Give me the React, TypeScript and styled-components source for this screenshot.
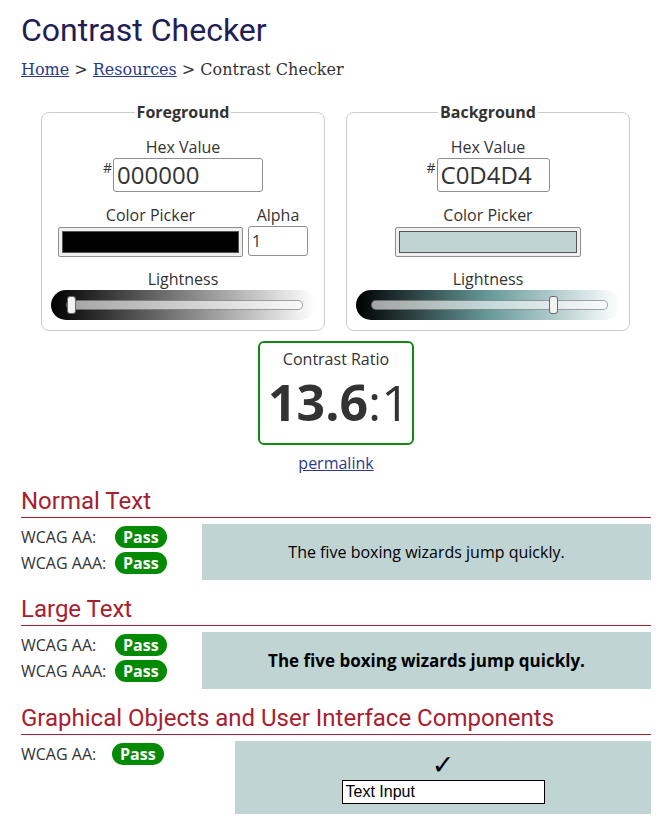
import React from "react";
import styled, { createGlobalStyle } from "styled-components";

const GlobalStyle = createGlobalStyle`
  body {
    margin: 0;
    background: #fff;
    font-family: "Open Sans", "DejaVu Sans", sans-serif;
    color: #333;
  }
`;

const Page = styled.main`
  width: 630px;
  padding: 11px 0 20px 21px;
`;

const Title = styled.h1`
  margin: 0;
  font-family: Roboto, "Liberation Sans", sans-serif;
  font-weight: 400;
  font-size: 32px;
  line-height: 38px;
  color: #1e2056;
`;

const Crumbs = styled.nav`
  margin-top: 10px;
  font-family: "DejaVu Serif", "Liberation Serif", serif;
  font-size: 16px;
  line-height: 22px;
  color: #333;
`;

const Link = styled.a`
  color: #2b3a8c;
  text-decoration: underline;
`;

const Panels = styled.div`
  display: grid;
  grid-template-columns: 284px 284px;
  column-gap: 21px;
  margin-top: 20px;
  padding-left: 20px;
`;

const Panel = styled.fieldset`
  margin: 0;
  padding: 14px 8px 10px;
  border: 1px solid #ccc;
  border-radius: 8px;
  min-width: 0;
  display: flex;
  flex-direction: column;
  align-items: center;
`;

const Legend = styled.legend`
  margin: 0 auto;
  padding: 0 2px;
  font-weight: 700;
  font-size: 16px;
  line-height: 22px;
  color: #333;
`;

const Label = styled.div<{ $gap?: number }>`
  margin-top: ${(p) => p.$gap ?? 0}px;
  font-size: 16px;
  line-height: 20px;
  color: #333;
  text-align: center;
`;

const HexRow = styled.div`
  display: flex;
  align-items: flex-start;
  margin-top: 1px;
`;

const Hash = styled.span`
  font-size: 14px;
  line-height: 14px;
  margin-top: 3px;
  padding-right: 1px;
`;

const TextBox = styled.div<{ $w: number; $h: number; $size: number; $mt?: number }>`
  box-sizing: border-box;
  width: ${(p) => p.$w}px;
  height: ${(p) => p.$h}px;
  margin-top: ${(p) => p.$mt ?? 0}px;
  border: 1px solid #8f8f8f;
  border-radius: 3px;
  padding: 0 3px;
  font-size: ${(p) => p.$size}px;
  line-height: ${(p) => p.$h - 2}px;
  color: #333;
  background: #fff;
`;

const PickerRow = styled.div`
  display: flex;
  gap: 5px;
  align-items: flex-start;
`;

const PickerCol = styled.div`
  display: flex;
  flex-direction: column;
  align-items: center;
`;

const Swatch = styled.div<{ $w: number }>`
  box-sizing: border-box;
  width: ${(p) => p.$w}px;
  height: 30px;
  margin-top: 2px;
  padding: 3px 3px;
  border: 1px solid #8f8f8f;
  border-radius: 2px;
  background: #efefef;
`;

const SwatchFill = styled.div<{ $c: string }>`
  box-sizing: border-box;
  height: 100%;
  border: 1px solid #555;
  background: ${(p) => p.$c};
`;

const SliderWell = styled.div<{ $g: string }>`
  box-sizing: border-box;
  width: 264px;
  height: 30px;
  margin-top: 1px;
  border-radius: 15px;
  padding: 0 12px 0 15px;
  display: flex;
  align-items: center;
  background: ${(p) => p.$g};
`;

const Track = styled.div`
  position: relative;
  flex: 1;
  box-sizing: border-box;
  height: 10px;
  border-radius: 5px;
  border: 1px solid rgba(0, 0, 0, 0.35);
  background: rgba(255, 255, 255, 0.62);
`;

const Thumb = styled.div`
  position: absolute;
  top: 50%;
  box-sizing: border-box;
  width: 9px;
  height: 18px;
  margin-top: -9px;
  border: 1px solid #666;
  border-radius: 3px;
  background: #f2f2f2;
`;

const RatioBox = styled.div`
  box-sizing: border-box;
  width: 156px;
  margin: 10px auto 0;
  padding: 6px 8px 8px;
  border: 2px solid #128a12;
  border-radius: 6px;
  text-align: center;
`;

const RatioValue = styled.div`
  font-size: 50px;
  line-height: 66px;
  color: #333;
  b {
    font-weight: 700;
  }
`;

const Permalink = styled(Link)`
  display: block;
  width: max-content;
  margin: 7px auto 0;
  font-size: 16px;
  line-height: 22px;
`;

const SectionTitle = styled.h2<{ $gap: number }>`
  margin: ${(p) => p.$gap}px 0 0;
  padding-bottom: 2px;
  border-bottom: 1px solid #a8202e;
  font-family: Roboto, "Liberation Sans", sans-serif;
  font-weight: 400;
  font-size: 24px;
  line-height: 28px;
  color: #a8202e;
`;

const Result = styled.div`
  display: flex;
  margin-top: 6px;
`;

const Statuses = styled.div<{ $w: number }>`
  width: ${(p) => p.$w}px;
  flex: none;
`;

const StatusRow = styled.div`
  display: flex;
  align-items: center;
  height: 26px;
  font-size: 16px;
`;

const StatusLabel = styled.span<{ $w: number }>`
  width: ${(p) => p.$w}px;
  color: #333;
`;

const Badge = styled.span`
  height: 22px;
  line-height: 22px;
  padding: 0 8px;
  border-radius: 11px;
  background: #058a05;
  color: #fff;
  font-weight: 700;
  font-size: 16px;
`;

const Sample = styled.div<{ $h: number; $bold?: boolean }>`
  flex: 1;
  height: ${(p) => p.$h}px;
  background: #c0d4d4;
  color: #000;
  display: flex;
  align-items: center;
  justify-content: center;
  font-size: ${(p) => (p.$bold ? 17 : 16)}px;
  font-weight: ${(p) => (p.$bold ? 700 : 400)};
`;

const UiSample = styled.div`
  flex: 1;
  height: 73px;
  box-sizing: border-box;
  padding-top: 10px;
  background: #c0d4d4;
  display: flex;
  flex-direction: column;
  align-items: center;
`;

const Check = styled.div`
  font-family: "DejaVu Sans", sans-serif;
  font-size: 27px;
  line-height: 28px;
  color: #000;
`;

const FakeInput = styled.div`
  box-sizing: border-box;
  width: 203px;
  height: 24px;
  margin-top: 1px;
  padding: 0 3px;
  border: 1px solid #000;
  background: #fff;
  font-family: "Liberation Sans", Arial, sans-serif;
  font-size: 16px;
  line-height: 22px;
  color: #000;
`;

const Slider = ({ value, gradient }: { value: number; gradient: string }) => (
  <SliderWell $g={gradient}>
    <Track>
      <Thumb style={{ left: `calc(${value} * (100% - 11px))` }} />
    </Track>
  </SliderWell>
);

const StatusList = ({ rows, labelW }: { rows: string[]; labelW: number }) => (
  <>
    {rows.map((r) => (
      <StatusRow key={r}>
        <StatusLabel $w={labelW}>{r}</StatusLabel>
        <Badge>Pass</Badge>
      </StatusRow>
    ))}
  </>
);

export default function App() {
  return (
    <>
      <GlobalStyle />
      <Page>
        <Title>Contrast Checker</Title>
        <Crumbs>
          <Link href="#">Home</Link> &gt; <Link href="#">Resources</Link> &gt; Contrast Checker
        </Crumbs>

        <Panels>
          <Panel>
            <Legend>Foreground</Legend>
            <Label>Hex Value</Label>
            <HexRow>
              <Hash>#</Hash>
              <TextBox $w={150} $h={34} $size={24}>000000</TextBox>
            </HexRow>
            <PickerRow>
              <PickerCol>
                <Label $gap={13}>Color Picker</Label>
                <Swatch $w={185}>
                  <SwatchFill $c="#000" />
                </Swatch>
              </PickerCol>
              <PickerCol>
                <Label $gap={13}>Alpha</Label>
                <TextBox $w={60} $h={30} $size={16} $mt={1}>1</TextBox>
              </PickerCol>
            </PickerRow>
            <Label $gap={12}>Lightness</Label>
            <Slider value={0} gradient="linear-gradient(to right, #000, #fff)" />
          </Panel>

          <Panel>
            <Legend>Background</Legend>
            <Label>Hex Value</Label>
            <HexRow>
              <Hash>#</Hash>
              <TextBox $w={113} $h={34} $size={24}>C0D4D4</TextBox>
            </HexRow>
            <PickerCol>
              <Label $gap={13}>Color Picker</Label>
              <Swatch $w={186}>
                <SwatchFill $c="#c0d4d4" />
              </Swatch>
            </PickerCol>
            <Label $gap={12}>Lightness</Label>
            <Slider
              value={0.79}
              gradient="linear-gradient(to right, #000, hsl(180, 20%, 50%), #fff)"
            />
          </Panel>
        </Panels>

        <RatioBox>
          <Label>Contrast Ratio</Label>
          <RatioValue>
            <b>13.6</b>:1
          </RatioValue>
        </RatioBox>
        <Permalink href="#">permalink</Permalink>

        <SectionTitle $gap={13}>Normal Text</SectionTitle>
        <Result>
          <Statuses $w={181}>
            <StatusList rows={["WCAG AA:", "WCAG AAA:"]} labelW={94} />
          </Statuses>
          <Sample $h={56}>The five boxing wizards jump quickly.</Sample>
        </Result>

        <SectionTitle $gap={15}>Large Text</SectionTitle>
        <Result>
          <Statuses $w={181}>
            <StatusList rows={["WCAG AA:", "WCAG AAA:"]} labelW={94} />
          </Statuses>
          <Sample $h={57} $bold>
            The five boxing wizards jump quickly.
          </Sample>
        </Result>

        <SectionTitle $gap={15}>Graphical Objects and User Interface Components</SectionTitle>
        <Result>
          <Statuses $w={214}>
            <StatusList rows={["WCAG AA:"]} labelW={91} />
          </Statuses>
          <UiSample>
            <Check>✓</Check>
            <FakeInput>Text Input</FakeInput>
          </UiSample>
        </Result>
      </Page>
    </>
  );
}
